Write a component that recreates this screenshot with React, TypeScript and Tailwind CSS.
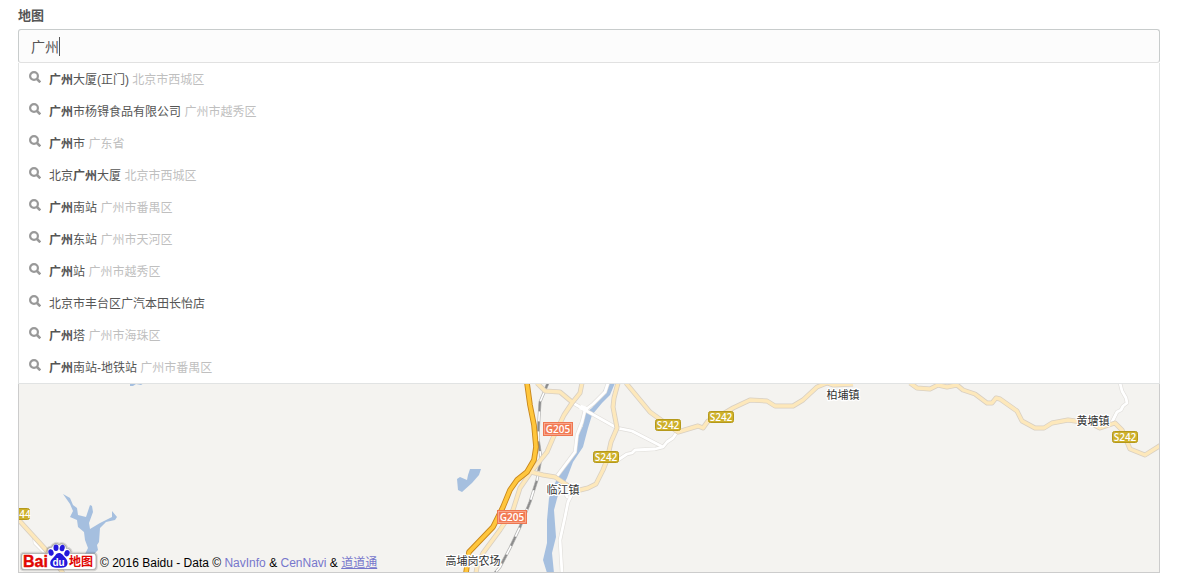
import { useState } from "react";

type Suggestion = { before?: string; match?: string; after?: string; area?: string };

const suggestions: Suggestion[] = [
  { match: "广州", after: "大厦(正门)", area: "北京市西城区" },
  { match: "广州", after: "市杨锝食品有限公司", area: "广州市越秀区" },
  { match: "广州", after: "市", area: "广东省" },
  { before: "北京", match: "广州", after: "大厦", area: "北京市西城区" },
  { match: "广州", after: "南站", area: "广州市番禺区" },
  { match: "广州", after: "东站", area: "广州市天河区" },
  { match: "广州", after: "站", area: "广州市越秀区" },
  { before: "北京市丰台区广汽本田长怡店" },
  { match: "广州", after: "塔", area: "广州市海珠区" },
  { match: "广州", after: "南站-地铁站", area: "广州市番禺区" },
];

const whiteRoads = [
  "M573 403L585 410L617 428L632 431L663 447",
  "M677 432L673 438L667 442L663 447L655 449L635 450L632 453L627 454L618 460",
  "M608 383L605 392L593 404L585 410L582 422L577 435L575 452L557 476",
  "M574 490L568 502L565 517L560 540L562 573",
  "M560 486L568 498",
  "M1120 383L1122 391L1126 398L1127 403L1123 406L1121 410L1117 412L1111 424",
  "M34 536L35 543L44 552",
];

const creamRoads = [
  "M537 383L545 391L560 392L572 402",
  "M582 383L580 393L572 403L564 415L553 438L547 452L535 467L531 472L520 488L513 510L500 530L483 553L477 567L476 573",
  "M531 472L543 475L555 477L567 485L580 490L588 488L596 484L603 470L607 460L611 442L617 428L613 407L614 398L618 383",
  "M626 383L650 412L668 425L678 432L698 426L703 428L708 421L718 417L733 408L750 400L767 401L775 406L793 406L803 400L817 387L827 383L833 385L853 384",
  "M910 383L917 388L930 389L938 385L947 387L957 385L963 390L975 394L987 403L992 403L996 398L1000 399L1017 411L1022 421L1035 428L1044 428L1052 423L1068 420L1090 423L1100 428L1115 423L1122 430L1130 449L1145 455L1161 445",
  "M17 518L47 551L63 573",
];

const highway =
  "M527 383L530 405L534 425L536 447L534 460L527 472L517 480L510 490L503 507L493 527L469 552L466 573";
const railway =
  "M548 383L540 402L539 418L538 438L541 458L537 480L530 502L520 527L510 548L500 567L495 573";

const provincial = [
  { x: 655, y: 419, name: "S242", textX: 668 },
  { x: 708, y: 411, name: "S242", textX: 721 },
  { x: 593, y: 451, name: "S242", textX: 606 },
  { x: 1112, y: 431, name: "S242", textX: 1125 },
  { x: 4, y: 508, name: "44", textX: 25 },
];
const national = [
  { x: 543, y: 422 },
  { x: 497, y: 510 },
];
const places = [
  { x: 843, y: 399, name: "柏埔镇" },
  { x: 1093, y: 425, name: "黄塘镇" },
  { x: 563, y: 494, name: "临江镇" },
  { x: 473, y: 565, name: "高埔岗农场" },
];

function MapDrawing() {
  return (
    <svg
      className="block h-full w-full"
      viewBox="19 74 1140 498"
      preserveAspectRatio="xMidYMid slice"
      role="img"
      aria-label="地图"
    >
      <g fill="#a5bfdf">
        <path d="M607 383H615L610 395L602 403L592 415L588 428L583 447L573 462L567 478L558 495L554 510L556 537L552 553L554 573H547L543 560L547 543L547 520L549 498L558 476L575 452L577 437L583 426L584 414L592 408L600 398Z" />
        <path d="M470 469H481L479 475L472 483L462 492L458 490L457 479L460 477L467 480L468 475Z" />
        <path d="M63 494L70 498L73 505L77 508L78 515L86 517L90 505L92 506L93 512L89 523L90 529L100 523L112 517L112 511L117 517L115 520L106 522L100 528L99 542L97 545L98 550L89 559L85 554L88 548L85 540L84 532L78 527L77 520L70 517L73 511L70 504Z" />
        <path d="M130 383H144L141 385L136 384L133 386H130Z" />
      </g>
      <g fill="none" strokeLinejoin="round">
        {whiteRoads.map((d) => (
          <path key={d} d={d} stroke="#e0deda" strokeWidth="4" />
        ))}
        {whiteRoads.map((d) => (
          <path key={d} d={d} stroke="#ffffff" strokeWidth="2.8" />
        ))}
        <path d="M580 407L588 410" stroke="#ffffff" strokeWidth="5" />
        <path d={railway} stroke="#b5b5b3" strokeWidth="3" />
        <path d={railway} stroke="#ffffff" strokeWidth="1.6" />
        <path d={railway} stroke="#8c8c8c" strokeWidth="2" strokeDasharray="10 10" />
        {creamRoads.map((d) => (
          <path key={d} d={d} stroke="#d8cfc2" strokeWidth="5" />
        ))}
        {creamRoads.map((d) => (
          <path key={d} d={d} stroke="#fde8bb" strokeWidth="3.4" />
        ))}
        <path d={highway} stroke="#c8871c" strokeWidth="5.6" />
        <path d={highway} stroke="#ffc63c" strokeWidth="3.8" />
      </g>
      <g className="font-['Open_Sans',sans-serif] text-[10px] font-semibold" fill="#ffffff" textAnchor="middle">
        {provincial.map((p) => (
          <g key={p.x}>
            <rect x={p.x + 0.5} y={p.y + 0.5} width="25" height="11" rx="2" fill="#cdb02b" stroke="#b5991b" />
            <text x={p.textX} y={p.y + 10}>{p.name}</text>
          </g>
        ))}
        {national.map((p) => (
          <g key={p.x}>
            <rect x={p.x + 0.5} y={p.y + 0.5} width="29" height="13" fill="#f27a54" stroke="#ee7650" />
            <rect x={p.x + 1.5} y={p.y + 1.5} width="27" height="11" fill="none" stroke="#f9b199" strokeWidth="0.8" />
            <text x={p.x + 15} y={p.y + 11}>G205</text>
          </g>
        ))}
      </g>
      <g
        className="text-[11px]"
        fill="#333333"
        stroke="#ffffff"
        strokeWidth="2.5"
        strokeLinejoin="round"
        paintOrder="stroke"
        textAnchor="middle"
      >
        {places.map((p) => (
          <text key={p.name} x={p.x} y={p.y}>{p.name}</text>
        ))}
      </g>
    </svg>
  );
}

const logoOutline =
  "M4 13.500H27.500C26.500 9 29 7 31.500 7.500C33 3.500 37 2.500 39 5C42 2.500 46 4.500 46.500 8.500C50 8.500 51.500 11 50.500 13.500H73Q76 13.500 76 16.500V26.500Q76 29.500 73 29.500H4Q1.500 29.500 1.500 26.500V16.500Q1.500 13.500 4 13.500Z";

function BaiduLogo() {
  return (
    <svg className="block h-[32px] w-[79px]" viewBox="0 0 79 32" role="img" aria-label="百度地图">
      <path d={logoOutline} fill="none" stroke="#000000" strokeOpacity="0.12" strokeWidth="3.500" />
      <path d={logoOutline} fill="#ffffff" stroke="#000000" strokeOpacity="0.22" strokeWidth="1.200" />
      <text x="3" y="27" className="font-['Liberation_Sans',sans-serif] text-[16px] font-bold" fill="#e10602" stroke="#e10602" strokeWidth="0.4">Bai</text>
      <g fill="#2319dc">
        <ellipse cx="31" cy="12.500" rx="2.600" ry="3.300" transform="rotate(-15 31 12.500)" />
        <ellipse cx="36" cy="7.700" rx="2.500" ry="3.300" />
        <ellipse cx="42.200" cy="8" rx="2.500" ry="3.300" transform="rotate(12 42.200 8)" />
        <ellipse cx="47" cy="13.200" rx="2.600" ry="3.200" transform="rotate(20 47 13.200)" />
        <path d="M39 13C42 13 43 15.500 45.500 18C48.500 21 48.500 27 43.500 27.500C40.500 27.800 37 27.800 34.500 27.500C29.500 27 29 21.500 32.500 18.500C35.500 16 36 13 39 13Z" />
      </g>
      <text x="38.500" y="25.500" textAnchor="middle" className="font-['Liberation_Sans',sans-serif] text-[10px] font-bold" fill="#ffffff">du</text>
      <text x="49" y="26" className="text-[12px] font-bold" fill="#e10602">地图</text>
    </svg>
  );
}

function SearchIcon() {
  return (
    <svg
      className="mb-1 size-3 shrink-0 text-[#999999]"
      viewBox="0 0 12 12"
      fill="none"
      stroke="currentColor"
      aria-hidden="true"
    >
      <circle cx="5" cy="5" r="3.900" strokeWidth="2.200" />
      <path d="M8 8L11.300 11.300" strokeWidth="2.600" />
    </svg>
  );
}

export default function App() {
  const [query, setQuery] = useState("广州");
  return (
    <main className="bg-white pt-[7px] pr-[21px] pb-[15px] pl-[18px] font-['Liberation_Sans','Noto_Sans_CJK_SC',sans-serif] text-[#555555]">
      <label htmlFor="place" className="block h-[22px] text-[13px] leading-[18px] font-bold">
        地图
      </label>
      <div className="relative z-10">
        <input
          id="place"
          type="text"
          autoComplete="off"
          value={query}
          onChange={(e) => setQuery(e.target.value)}
          className="block h-[34px] w-full rounded-[3px] border border-[#c8cccc] border-b-[#e1e1e1] bg-[#fcfcfc] px-3 text-sm text-[#555555] outline-none"
        />
        <span aria-hidden="true" className="absolute top-2 left-[41px] h-[19px] w-px bg-[#555555]" />
        <ul className="absolute top-full right-0 left-0 border border-t-0 border-[#e1e3e3] bg-white text-xs">
          {suggestions.map((s, i) => (
            <li key={i}>
              <button type="button" className="flex h-8 w-full items-center gap-2 px-[10px] text-left">
                <SearchIcon />
                <span className="pt-0.5">
                  {s.before}
                  {s.match && <b>{s.match}</b>}
                  {s.after}
                  {s.area && <span className="text-[#bfbfbf]"> {s.area}</span>}
                </span>
              </button>
            </li>
          ))}
        </ul>
      </div>
      <section className="relative mt-[10px] h-[500px] overflow-hidden border border-[#cccccc] bg-[#f4f3f0]">
        <MapDrawing />
        <div className="absolute bottom-0 left-[1px] flex items-end gap-px">
          <BaiduLogo />
          <p className="text-xs leading-[18px] text-black">
            © 2016 Baidu - Data ©{" "}
            <a href="#navinfo" className="text-[#7777cc]">NavInfo</a> &{" "}
            <a href="#cennavi" className="text-[#7777cc]">CenNavi</a> &{" "}
            <a href="#daodaotong" className="text-[#7777cc] underline">道道通</a>
          </p>
        </div>
      </section>
    </main>
  );
}
